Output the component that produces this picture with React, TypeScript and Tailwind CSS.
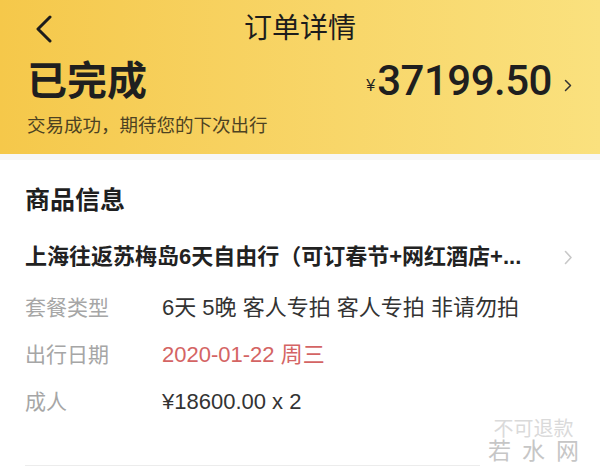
import React from 'react';

const rows = [
  { label: '套餐类型', value: '6天 5晚 客人专拍 客人专拍 非请勿拍', tone: 'text-[#333333]' },
  { label: '出行日期', value: '2020-01-22 周三', tone: 'text-[#d46464]' },
  { label: '成人', value: '¥18600.00 x 2', tone: 'text-[#333333]' },
];

export default function App() {
  return (
    <div className="w-[600px] h-[469px] overflow-hidden bg-[#f7f7f7] font-['Liberation_Sans','Noto_Sans_CJK_SC',sans-serif]">
      {/* yellow status header */}
      <div className="h-[154px] bg-gradient-to-r from-[#f5c84a] to-[#fae17e] px-[27px] pt-[10px]">
        <div className="relative h-[38px] flex items-center justify-center">
          <svg className="absolute left-[8px] top-[5px]" width="18" height="28" viewBox="0 0 18 28" fill="none">
            <path d="M15 2 L3 14 L15 26" stroke="#1c1c1c" strokeWidth="3" strokeLinecap="round" strokeLinejoin="round" />
          </svg>
          <span className="text-[28px] text-[#1c1c1c] leading-none">订单详情</span>
        </div>
        <div className="mt-[12px] flex items-center justify-between">
          <span className="text-[40px] font-bold text-[#1f1f1f] leading-none">已完成</span>
          <div className="flex items-end mr-[1px]">
            <span className="text-[16px] text-[#1f1f1f] mb-[4px] mr-[2px]">¥</span>
            <span className="font-['Roboto',sans-serif] text-[42px] font-medium text-[#1f1f1f] leading-none tracking-[-0.5px]">37199.50</span>
            <svg className="ml-[12px] mb-[10px]" width="8" height="13" viewBox="0 0 8 13" fill="none">
              <path d="M1.5 1.5 L6.5 6.5 L1.5 11.5" stroke="#333" strokeWidth="1.5" strokeLinecap="round" strokeLinejoin="round" />
            </svg>
          </div>
        </div>
        <div className="mt-[15px] text-[18.5px] text-[#4d4222] leading-none">交易成功，期待您的下次出行</div>
      </div>

      {/* product card */}
      <div className="mt-[6px] bg-white px-[25px] pt-[28px] h-[310px]">
        <div className="text-[25px] font-semibold text-[#1f1f1f] leading-none">商品信息</div>
        <div className="mt-[33px] flex items-center justify-between">
          <span className="text-[22px] font-semibold text-[#222222] leading-none">上海往返苏梅岛6天自由行（可订春节+网红酒店+...</span>
          <svg className="mr-[2px]" width="9" height="15" viewBox="0 0 9 15" fill="none">
            <path d="M1.5 1.5 L7 7.5 L1.5 13.5" stroke="#c8c8c8" strokeWidth="1.6" strokeLinecap="round" strokeLinejoin="round" />
          </svg>
        </div>
        <div className="mt-[29px] flex flex-col gap-[25px]">
          {rows.map((r) => (
            <div key={r.label} className="flex items-center leading-[22px]">
              <span className="w-[137px] text-[21px] text-[#a6a6a6]">{r.label}</span>
              <span className={`text-[22px] ${r.tone}`}>{r.value}</span>
            </div>
          ))}
        </div>
        <div className="mt-[52px] border-b border-[#ececec] mr-[95px]" />
        {/* watermark */}
        <div className="relative">
          <div className="absolute right-[-15px] -top-[48px] flex flex-col items-center text-[#c6c6c6]">
            <span className="text-[20px] text-[#dadada] leading-[22px]">不可退款</span>
            <span className="text-[23px] tracking-[11px] pl-[11px] leading-[23px]">若水网</span>
          </div>
        </div>
      </div>
    </div>
  );
}
